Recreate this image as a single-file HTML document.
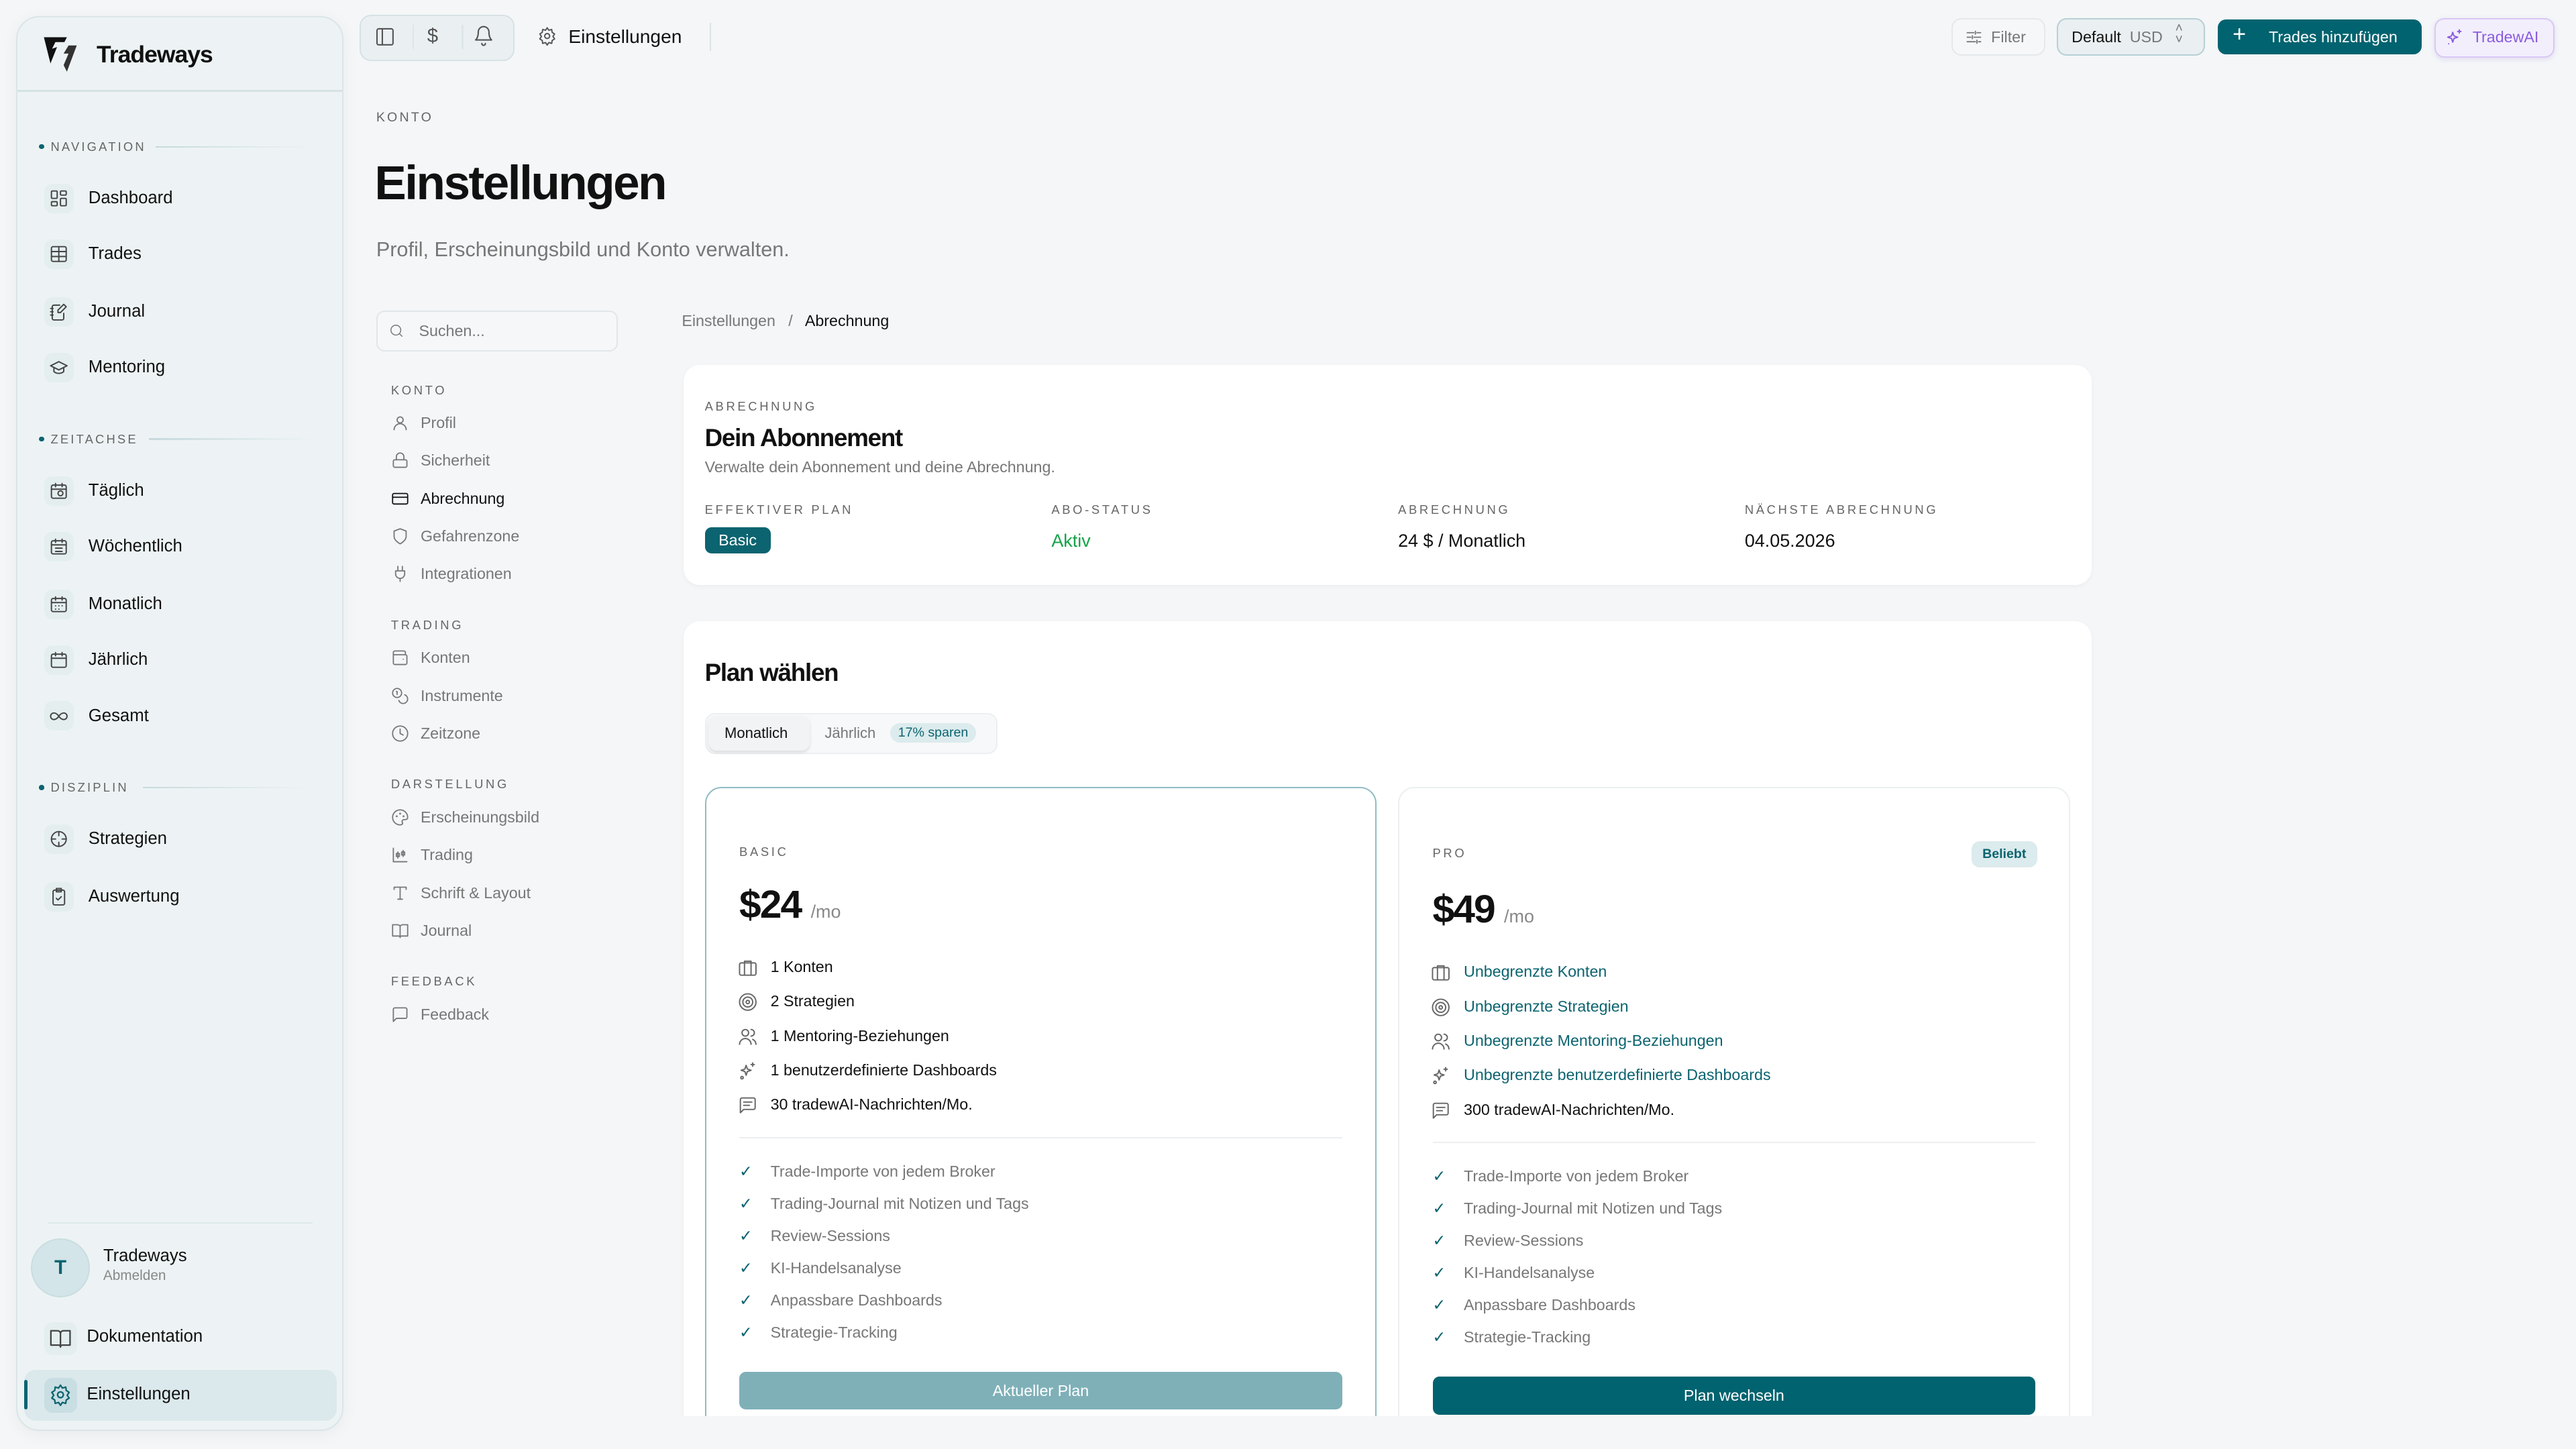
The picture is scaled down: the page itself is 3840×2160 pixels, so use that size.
<!DOCTYPE html>
<html><head><meta charset="utf-8">
<style>
*{box-sizing:border-box;margin:0;padding:0}
html,body{width:3840px;height:2160px;overflow:hidden;background:#f4f6f8}
#f{position:absolute;left:0;top:0;width:1568px;height:882px;zoom:2.44898;font-family:"Liberation Sans",sans-serif;color:#111;background:#f4f6f8}
.a{position:absolute;white-space:nowrap}
svg{position:absolute;fill:none;stroke:currentColor;stroke-width:1.6;stroke-linecap:round;stroke-linejoin:round}
.sb{position:absolute;left:10px;top:10px;width:199px;height:861px;background:#edf3f4;border:1px solid #dbe5e7;border-radius:14px;box-shadow:0 2px 10px rgba(0,0,0,.05)}
.lbl{font-size:7.5px;letter-spacing:1.3px;color:#666}
.dot{position:absolute;width:3px;height:3px;border-radius:50%;background:#0c6470}
.ni{position:absolute;left:16px;width:18px;height:18px;border-radius:5px;background:#e4eeef;color:#444}
.nt{position:absolute;left:43px;font-size:10.5px;color:#111}
.sn{position:absolute;font-size:9.5px;color:#777}
.si{position:absolute;left:238px;width:11px;height:11px;color:#777}
.card{position:absolute;background:#fff;border-radius:10px;box-shadow:0 1px 3px rgba(0,0,0,.04)}
.ul{font-size:7.5px;letter-spacing:1.5px;color:#666}
.ft{font-size:9.5px;color:#111}
.ck{font-size:9.5px;color:#777}
.cs{color:#0c6470}
</style></head><body><div id="f">

<!-- Sidebar -->
<div class="sb">
 <div style="position:absolute;left:0;right:0;top:44px;height:1px;background:#d5e2e4"></div>
 <svg style="left:15px;top:11px;width:24px;height:24px;stroke:none" viewBox="0 0 24 24"><path fill="#111" d="M1 1h14l-1.5 3H8l-2 4 3-1-4 10L1 1z"/><path fill="#333" d="M16 6h5l-6 16-2-4 3-7h-3z"/></svg>
 <div class="a" style="left:48px;top:14px;font-size:14.5px;font-weight:bold;letter-spacing:-.4px">Tradeways</div>

 <div class="dot" style="left:13px;top:77px"></div><div class="a lbl" style="left:20px;top:74px">NAVIGATION</div>
 <div style="position:absolute;left:84px;top:78px;width:95px;height:1px;background:linear-gradient(90deg,#c6d9dc,transparent)"></div>
 <div class="ni" style="top:101px"><svg style="left:3px;top:3px;width:12px;height:12px" viewBox="0 0 24 24"><rect x="3" y="3" width="7" height="9" rx="1"/><rect x="14" y="3" width="7" height="5" rx="1"/><rect x="14" y="12" width="7" height="9" rx="1"/><rect x="3" y="16" width="7" height="5" rx="1"/></svg></div><div class="a nt" style="top:104px">Dashboard</div>
 <div class="ni" style="top:135px"><svg style="left:3px;top:3px;width:12px;height:12px" viewBox="0 0 24 24"><rect x="3" y="3" width="18" height="18" rx="2"/><path d="M3 9h18M3 15h18M12 3v18"/></svg></div><div class="a nt" style="top:138px">Trades</div>
 <div class="ni" style="top:170px"><svg style="left:3px;top:3px;width:12px;height:12px" viewBox="0 0 24 24"><path d="M13 4H6a2 2 0 0 0-2 2v14a2 2 0 0 0 2 2h10a2 2 0 0 0 2-2v-6M2 8h3M2 12h3M2 16h3M18 3l3 3-7 7h-3v-3z"/></svg></div><div class="a nt" style="top:173px">Journal</div>
 <div class="ni" style="top:204px"><svg style="left:3px;top:3px;width:12px;height:12px" viewBox="0 0 24 24"><path d="M22 10 12 5 2 10l10 5 10-5zM6 12v5c3 3 9 3 12 0v-5"/></svg></div><div class="a nt" style="top:207px">Mentoring</div>

 <div class="dot" style="left:13px;top:255px"></div><div class="a lbl" style="left:20px;top:252px">ZEITACHSE</div>
 <div style="position:absolute;left:80px;top:256px;width:99px;height:1px;background:linear-gradient(90deg,#c6d9dc,transparent)"></div>
 <div class="ni" style="top:279px"><svg style="left:3px;top:3px;width:12px;height:12px" viewBox="0 0 24 24"><rect x="3" y="5" width="18" height="16" rx="2"/><path d="M8 3v4M16 3v4M3 10h18"/><circle cx="14" cy="15" r="3"/></svg></div><div class="a nt" style="top:282px">Täglich</div>
 <div class="ni" style="top:313px"><svg style="left:3px;top:3px;width:12px;height:12px" viewBox="0 0 24 24"><rect x="3" y="5" width="18" height="16" rx="2"/><path d="M8 3v4M16 3v4M3 10h18M8 14h8M8 18h8"/></svg></div><div class="a nt" style="top:316px">Wöchentlich</div>
 <div class="ni" style="top:348px"><svg style="left:3px;top:3px;width:12px;height:12px" viewBox="0 0 24 24"><rect x="3" y="5" width="18" height="16" rx="2"/><path d="M8 3v4M16 3v4M3 10h18M8 14h.1M12 14h.1M16 14h.1M8 18h.1M12 18h.1"/></svg></div><div class="a nt" style="top:351px">Monatlich</div>
 <div class="ni" style="top:382px"><svg style="left:3px;top:3px;width:12px;height:12px" viewBox="0 0 24 24"><rect x="3" y="5" width="18" height="16" rx="2"/><path d="M8 3v4M16 3v4M3 10h18"/></svg></div><div class="a nt" style="top:385px">Jährlich</div>
 <div class="ni" style="top:416px"><svg style="left:3px;top:3px;width:12px;height:12px" viewBox="0 0 24 24"><path d="M12 12c-2-3-4-4-6-4a4 4 0 0 0 0 8c2 0 4-1 6-4zm0 0c2 3 4 4 6 4a4 4 0 0 0 0-8c-2 0-4 1-6 4z"/></svg></div><div class="a nt" style="top:419px">Gesamt</div>

 <div class="dot" style="left:13px;top:467px"></div><div class="a lbl" style="left:20px;top:464px">DISZIPLIN</div>
 <div style="position:absolute;left:76px;top:468px;width:103px;height:1px;background:linear-gradient(90deg,#c6d9dc,transparent)"></div>
 <div class="ni" style="top:491px"><svg style="left:3px;top:3px;width:12px;height:12px" viewBox="0 0 24 24"><circle cx="12" cy="12" r="9"/><path d="M12 3v5M12 16v5M3 12h5M16 12h5"/></svg></div><div class="a nt" style="top:494px">Strategien</div>
 <div class="ni" style="top:526px"><svg style="left:3px;top:3px;width:12px;height:12px" viewBox="0 0 24 24"><rect x="5" y="4" width="14" height="18" rx="2"/><path d="M9 2h6v4H9zM9 14l2 2 4-4"/></svg></div><div class="a nt" style="top:529px">Auswertung</div>

 <div style="position:absolute;left:18px;right:18px;top:733px;height:1px;background:#dde8ea"></div>
 <div style="position:absolute;left:8px;top:743px;width:36px;height:36px;border-radius:50%;background:#d3e5e8;border:1px solid #c9dde0;color:#0c6470;font-size:12px;font-weight:bold;text-align:center;line-height:34px">T</div>
 <div class="a" style="left:52px;top:748px;font-size:10.5px">Tradeways</div>
 <div class="a" style="left:52px;top:761px;font-size:8.5px;color:#888">Abmelden</div>
 <div class="ni" style="left:16px;top:794px;width:20px;height:20px"><svg style="left:3px;top:3px;width:14px;height:14px" viewBox="0 0 24 24"><path d="M2 4h7a3 3 0 0 1 3 3v14a2 2 0 0 0-2-2H2zM22 4h-7a3 3 0 0 0-3 3v14a2 2 0 0 1 2-2h8z"/></svg></div><div class="a nt" style="left:42px;top:797px">Dokumentation</div>
 <div style="position:absolute;left:4px;top:823px;width:190px;height:31px;border-radius:7px;background:#dbe8ec"></div>
 <div style="position:absolute;left:4px;top:829px;width:2px;height:18px;background:#0c6470;border-radius:1px"></div>
 <div class="ni" style="left:16px;top:828px;width:20px;height:21px;background:#c8dee2;color:#0c6470"><svg style="left:3px;top:3px;width:14px;height:14px" viewBox="0 0 24 24"><circle cx="12" cy="12" r="3"/><path d="M12 2l2 3 3.5-1 .5 3.5 3 2-2 3 2 3-3 2-.5 3.5-3.5-1-2 3-2-3-3.5 1-.5-3.5-3-2 2-3-2-3 3-2 .5-3.5 3.5 1z"/></svg></div><div class="a nt" style="left:42px;top:832px">Einstellungen</div>
</div>

<!-- Top bar -->
<div style="position:absolute;left:219px;top:9px;width:94px;height:28px;border-radius:7px;background:#eaf0f2;border:1px solid #d6e2e5"></div>
<svg style="left:228px;top:16px;width:13px;height:13px;color:#555" viewBox="0 0 24 24"><rect x="3" y="3" width="18" height="18" rx="2"/><path d="M9 3v18"/></svg>
<div style="position:absolute;left:251px;top:15px;width:1px;height:15px;background:#dde6e8"></div>
<div class="a" style="left:260px;top:15px;font-size:12px;color:#555">$</div>
<div style="position:absolute;left:281px;top:15px;width:1px;height:15px;background:#dde6e8"></div>
<svg style="left:288px;top:15px;width:13px;height:13px;color:#555" viewBox="0 0 24 24"><path d="M6 8a6 6 0 0 1 12 0c0 7 3 9 3 9H3s3-2 3-9M10 21a2 2 0 0 0 4 0"/></svg>
<svg style="left:327px;top:16px;width:12px;height:12px;color:#555" viewBox="0 0 24 24"><circle cx="12" cy="12" r="3"/><path d="M12 2l2 3 3.5-1 .5 3.5 3 2-2 3 2 3-3 2-.5 3.5-3.5-1-2 3-2-3-3.5 1-.5-3.5-3-2 2-3-2-3 3-2 .5-3.5 3.5 1z"/></svg>
<div class="a" style="left:346px;top:16px;font-size:11.5px">Einstellungen</div>
<div style="position:absolute;left:432px;top:14px;width:1px;height:17px;background:#dde3e6"></div>

<div style="position:absolute;left:1188px;top:11px;width:57px;height:23px;border-radius:6px;border:1px solid #e6e9ec;background:#f5f7f9"></div>
<svg style="left:1196px;top:17px;width:11px;height:11px;color:#777" viewBox="0 0 24 24"><path d="M3 6h9M16 6h5M3 12h5M12 12h9M3 18h11M18 18h3M14 4v4M10 10v4M16 16v4"/></svg>
<div class="a" style="left:1212px;top:17px;font-size:9.5px;color:#777">Filter</div>
<div style="position:absolute;left:1252px;top:11px;width:90px;height:23px;border-radius:6px;border:1px solid #b7d0d5;background:#eaeff2"></div>
<div class="a" style="left:1261px;top:17px;font-size:9.5px"><b style="font-weight:normal;color:#111">Default</b> <span style="color:#777">&nbsp;USD</span></div>
<div class="a" style="left:1324px;top:14px;font-size:8px;color:#777;line-height:7px">˄<br>˅</div>
<div style="position:absolute;left:1350px;top:12px;width:124px;height:21px;border-radius:5px;background:#00636f"></div>
<div class="a" style="left:1359px;top:13px;font-size:14px;color:#fff;font-weight:300">+</div>
<div class="a" style="left:1381px;top:17px;font-size:9.5px;color:#fff">Trades hinzufügen</div>
<div style="position:absolute;left:1482px;top:11px;width:73px;height:24px;border-radius:6px;border:1px solid #d8c8f4;background:#f3eefc;box-shadow:0 1px 3px rgba(120,80,200,.15)"></div>
<svg style="left:1488px;top:17px;width:12px;height:12px;color:#8a5ce0" viewBox="0 0 24 24"><path d="M10 5l1.5 4.5L16 11l-4.5 1.5L10 17l-1.5-4.5L4 11l4.5-1.5zM18 2v4M16 4h4M5 19h.1"/></svg>
<div class="a" style="left:1505px;top:17px;font-size:9.5px;color:#8a5ce0">TradewAI</div>

<!-- Header -->
<div class="a lbl" style="left:229px;top:67px;font-size:8px">KONTO</div>
<div class="a" style="left:228px;top:95px;font-size:29px;font-weight:bold;letter-spacing:-1px">Einstellungen</div>
<div class="a" style="left:229px;top:145px;font-size:12.5px;color:#777">Profil, Erscheinungsbild und Konto verwalten.</div>

<!-- Search -->
<div style="position:absolute;left:229px;top:189px;width:147px;height:25px;border-radius:5px;border:1px solid #e2e6e9;background:#f5f7f9"></div>
<svg style="left:237px;top:197px;width:9px;height:9px;color:#777" viewBox="0 0 24 24"><circle cx="11" cy="11" r="8"/><path d="M21 21l-4-4"/></svg>
<div class="a" style="left:255px;top:196px;font-size:9.5px;color:#777">Suchen...</div>

<!-- Settings nav -->
<div class="a ul" style="left:238px;top:233px;font-size:7.5px">KONTO</div>
<svg class="si" style="top:252px" viewBox="0 0 24 24"><circle cx="12" cy="8" r="4"/><path d="M4 21a8 8 0 0 1 16 0"/></svg><div class="sn" style="left:256px;top:252px">Profil</div>
<svg class="si" style="top:275px" viewBox="0 0 24 24"><rect x="3" y="11" width="18" height="10" rx="2"/><path d="M7 11V7a5 5 0 0 1 10 0v4"/></svg><div class="sn" style="left:256px;top:275px">Sicherheit</div>
<svg class="si" style="top:298px;color:#111" viewBox="0 0 24 24"><rect x="2" y="5" width="20" height="14" rx="2"/><path d="M2 10h20"/></svg><div class="sn" style="left:256px;top:298px;color:#111">Abrechnung</div>
<svg class="si" style="top:321px" viewBox="0 0 24 24"><path d="M12 22s8-4 8-10V5l-8-3-8 3v7c0 6 8 10 8 10z"/></svg><div class="sn" style="left:256px;top:321px">Gefahrenzone</div>
<svg class="si" style="top:344px" viewBox="0 0 24 24"><path d="M9 2v6M15 2v6M6 8h12v4a6 6 0 0 1-12 0zM12 18v4"/></svg><div class="sn" style="left:256px;top:344px">Integrationen</div>
<div class="a ul" style="left:238px;top:376px">TRADING</div>
<svg class="si" style="top:395px" viewBox="0 0 24 24"><path d="M19 7V5a2 2 0 0 0-2-2H5a2 2 0 0 0-2 2v14a2 2 0 0 0 2 2h14a2 2 0 0 0 2-2v-9a2 2 0 0 0-2-2H3M16 14h.1"/></svg><div class="sn" style="left:256px;top:395px">Konten</div>
<svg class="si" style="top:418px" viewBox="0 0 24 24"><circle cx="8" cy="8" r="6"/><path d="M18.1 10.4A6 6 0 1 1 10.3 18M7 6h1v4"/></svg><div class="sn" style="left:256px;top:418px">Instrumente</div>
<svg class="si" style="top:441px" viewBox="0 0 24 24"><circle cx="12" cy="12" r="10"/><path d="M12 6v6l4 2"/></svg><div class="sn" style="left:256px;top:441px">Zeitzone</div>
<div class="a ul" style="left:238px;top:473px">DARSTELLUNG</div>
<svg class="si" style="top:492px" viewBox="0 0 24 24"><path d="M12 22a10 10 0 1 1 10-10c0 3-3 3-5 3s-3 2-2 4-1 3-3 3z"/><circle cx="7.5" cy="10.5" r=".5"/><circle cx="12" cy="7" r=".5"/><circle cx="16.5" cy="10.5" r=".5"/></svg><div class="sn" style="left:256px;top:492px">Erscheinungsbild</div>
<svg class="si" style="top:515px" viewBox="0 0 24 24"><path d="M3 3v18h18M9 8v8M16 6v8"/><rect x="7" y="10" width="4" height="4"/><rect x="14" y="8" width="4" height="4"/></svg><div class="sn" style="left:256px;top:515px">Trading</div>
<svg class="si" style="top:538px" viewBox="0 0 24 24"><path d="M4 7V4h16v3M9 20h6M12 4v16"/></svg><div class="sn" style="left:256px;top:538px">Schrift &amp; Layout</div>
<svg class="si" style="top:561px" viewBox="0 0 24 24"><path d="M2 4h7a3 3 0 0 1 3 3v14a2 2 0 0 0-2-2H2zM22 4h-7a3 3 0 0 0-3 3v14a2 2 0 0 1 2-2h8z"/></svg><div class="sn" style="left:256px;top:561px">Journal</div>
<div class="a ul" style="left:238px;top:593px">FEEDBACK</div>
<svg class="si" style="top:612px" viewBox="0 0 24 24"><path d="M21 15a2 2 0 0 1-2 2H7l-4 4V5a2 2 0 0 1 2-2h14a2 2 0 0 1 2 2z"/></svg><div class="sn" style="left:256px;top:612px">Feedback</div>

<!-- Breadcrumb -->
<div class="a" style="left:415px;top:190px;font-size:9.5px;color:#777">Einstellungen &nbsp;&nbsp;/&nbsp;&nbsp; <span style="color:#111">Abrechnung</span></div>

<!-- Card 1 -->
<div class="card" style="left:416px;top:222px;width:857px;height:134px"></div>
<div class="a ul" style="left:429px;top:243px">ABRECHNUNG</div>
<div class="a" style="left:429px;top:258px;font-size:15px;font-weight:bold;letter-spacing:-.5px">Dein Abonnement</div>
<div class="a" style="left:429px;top:279px;font-size:9.5px;color:#777">Verwalte dein Abonnement und deine Abrechnung.</div>
<div class="a ul" style="left:429px;top:306px">EFFEKTIVER PLAN</div>
<div class="a ul" style="left:640px;top:306px">ABO-STATUS</div>
<div class="a ul" style="left:851px;top:306px">ABRECHNUNG</div>
<div class="a ul" style="left:1062px;top:306px">NÄCHSTE ABRECHNUNG</div>
<div class="a" style="left:429px;top:321px;width:40px;height:16px;border-radius:4px;background:#0c6470;color:#fff;font-size:9.5px;text-align:center;line-height:16px">Basic</div>
<div class="a" style="left:640px;top:323px;font-size:11px;color:#16a34a">Aktiv</div>
<div class="a" style="left:851px;top:323px;font-size:11px">24 $ / Monatlich</div>
<div class="a" style="left:1062px;top:323px;font-size:11px">04.05.2026</div>

<!-- Card 2 -->
<div style="position:absolute;left:0;top:0;width:1568px;height:862px;overflow:hidden">
<div class="card" style="left:416px;top:378px;width:857px;height:520px"></div>
<div class="a" style="left:429px;top:401px;font-size:15px;font-weight:bold;letter-spacing:-.5px">Plan wählen</div>
<div style="position:absolute;left:429px;top:434px;width:178px;height:25px;border-radius:6px;background:#f7f8f9;border:1px solid #eceff1"></div>
<div style="position:absolute;left:431px;top:436px;width:62px;height:21px;border-radius:5px;background:#f1f3f4;box-shadow:0 1px 2px rgba(0,0,0,.12)"></div>
<div class="a" style="left:441px;top:441px;font-size:9px">Monatlich</div>
<div class="a" style="left:502px;top:441px;font-size:9px;color:#777">Jährlich</div>
<div class="a" style="left:542px;top:440px;width:52px;height:12px;border-radius:6px;background:#dcebed;color:#0c6470;font-size:8px;line-height:12px;text-align:center">17% sparen</div>

<!-- Basic -->
<div style="position:absolute;left:429px;top:479px;width:409px;height:420px;border:1px solid #8fbcc4;border-radius:10px;background:#fff"></div>
<div class="a ul" style="left:450px;top:514px">BASIC</div>
<div class="a" style="left:450px;top:537px;font-size:24px;font-weight:bold;letter-spacing:-.8px">$24 <span style="font-size:11px;font-weight:normal;color:#888;letter-spacing:0">/mo</span></div>

<!-- Pro -->
<div style="position:absolute;left:851px;top:479px;width:409px;height:420px;border:1px solid #eceff1;border-radius:10px;background:#fff"></div>
<div class="a ul" style="left:872px;top:515px">PRO</div>
<div class="a" style="left:1200px;top:512px;width:40px;height:16px;border-radius:5px;background:#dcebed;color:#0c6470;font-size:8px;font-weight:bold;text-align:center;line-height:16px">Beliebt</div>
<div class="a" style="left:872px;top:540px;font-size:24px;font-weight:bold;letter-spacing:-.8px">$49 <span style="font-size:11px;font-weight:normal;color:#888;letter-spacing:0">/mo</span></div>

<!-- Basic features -->
<svg style="left:449px;top:583px;width:12px;height:12px;color:#666" viewBox="0 0 24 24"><rect x="2" y="6" width="20" height="15" rx="2"/><path d="M8 21V4h8v17"/></svg><div class="a ft" style="left:469px;top:583px">1 Konten</div>
<svg style="left:449px;top:604px;width:12px;height:12px;color:#666" viewBox="0 0 24 24"><circle cx="12" cy="12" r="10"/><circle cx="12" cy="12" r="6"/><circle cx="12" cy="12" r="2"/></svg><div class="a ft" style="left:469px;top:604px">2 Strategien</div>
<svg style="left:449px;top:625px;width:12px;height:12px;color:#666" viewBox="0 0 24 24"><circle cx="9" cy="7" r="4"/><path d="M2 21a7 7 0 0 1 14 0M16 3a4 4 0 0 1 0 8M22 21a7 7 0 0 0-4-6"/></svg><div class="a ft" style="left:469px;top:625px">1 Mentoring-Beziehungen</div>
<svg style="left:449px;top:646px;width:12px;height:12px;color:#666" viewBox="0 0 24 24"><path d="M10 5l1.5 4.5L16 11l-4.5 1.5L10 17l-1.5-4.5L4 11l4.5-1.5zM18 2v4M16 4h4"/><circle cx="5" cy="20" r="1.5"/></svg><div class="a ft" style="left:469px;top:646px">1 benutzerdefinierte Dashboards</div>
<svg style="left:449px;top:667px;width:12px;height:12px;color:#666" viewBox="0 0 24 24"><path d="M21 15a2 2 0 0 1-2 2H7l-4 4V5a2 2 0 0 1 2-2h14a2 2 0 0 1 2 2zM7 8h10M7 12h7"/></svg><div class="a ft" style="left:469px;top:667px">30 tradewAI-Nachrichten/Mo.</div>
<div style="position:absolute;left:450px;top:692px;width:367px;height:1px;background:#eceff1"></div>

<!-- Pro features -->
<svg style="left:871px;top:586px;width:12px;height:12px;color:#666" viewBox="0 0 24 24"><rect x="2" y="6" width="20" height="15" rx="2"/><path d="M8 21V4h8v17"/></svg><div class="a ft cs" style="left:891px;top:586px">Unbegrenzte Konten</div>
<svg style="left:871px;top:607px;width:12px;height:12px;color:#666" viewBox="0 0 24 24"><circle cx="12" cy="12" r="10"/><circle cx="12" cy="12" r="6"/><circle cx="12" cy="12" r="2"/></svg><div class="a ft cs" style="left:891px;top:607px">Unbegrenzte Strategien</div>
<svg style="left:871px;top:628px;width:12px;height:12px;color:#666" viewBox="0 0 24 24"><circle cx="9" cy="7" r="4"/><path d="M2 21a7 7 0 0 1 14 0M16 3a4 4 0 0 1 0 8M22 21a7 7 0 0 0-4-6"/></svg><div class="a ft cs" style="left:891px;top:628px">Unbegrenzte Mentoring-Beziehungen</div>
<svg style="left:871px;top:649px;width:12px;height:12px;color:#666" viewBox="0 0 24 24"><path d="M10 5l1.5 4.5L16 11l-4.5 1.5L10 17l-1.5-4.5L4 11l4.5-1.5zM18 2v4M16 4h4"/><circle cx="5" cy="20" r="1.5"/></svg><div class="a ft cs" style="left:891px;top:649px">Unbegrenzte benutzerdefinierte Dashboards</div>
<svg style="left:871px;top:670px;width:12px;height:12px;color:#666" viewBox="0 0 24 24"><path d="M21 15a2 2 0 0 1-2 2H7l-4 4V5a2 2 0 0 1 2-2h14a2 2 0 0 1 2 2zM7 8h10M7 12h7"/></svg><div class="a ft" style="left:891px;top:670px">300 tradewAI-Nachrichten/Mo.</div>
<div style="position:absolute;left:872px;top:695px;width:367px;height:1px;background:#eceff1"></div>

<!-- checks -->
<div class="a" style="left:450px;top:703px;line-height:19.6px;font-size:9.5px;color:#0c6470">✓<br>✓<br>✓<br>✓<br>✓<br>✓</div>
<div class="a ck" style="left:469px;top:703px;line-height:19.6px">Trade-Importe von jedem Broker<br>Trading-Journal mit Notizen und Tags<br>Review-Sessions<br>KI-Handelsanalyse<br>Anpassbare Dashboards<br>Strategie-Tracking</div>
<div class="a" style="left:872px;top:706px;line-height:19.6px;font-size:9.5px;color:#0c6470">✓<br>✓<br>✓<br>✓<br>✓<br>✓</div>
<div class="a ck" style="left:891px;top:706px;line-height:19.6px">Trade-Importe von jedem Broker<br>Trading-Journal mit Notizen und Tags<br>Review-Sessions<br>KI-Handelsanalyse<br>Anpassbare Dashboards<br>Strategie-Tracking</div>

<div class="a" style="left:450px;top:835px;width:367px;height:23px;border-radius:4px;background:#7fb0b8;color:#fff;font-size:9.5px;text-align:center;line-height:23px">Aktueller Plan</div>
<div class="a" style="left:872px;top:838px;width:367px;height:23px;border-radius:4px;background:#00636f;color:#fff;font-size:9.5px;text-align:center;line-height:23px">Plan wechseln</div>
</div>

</div></body></html>
